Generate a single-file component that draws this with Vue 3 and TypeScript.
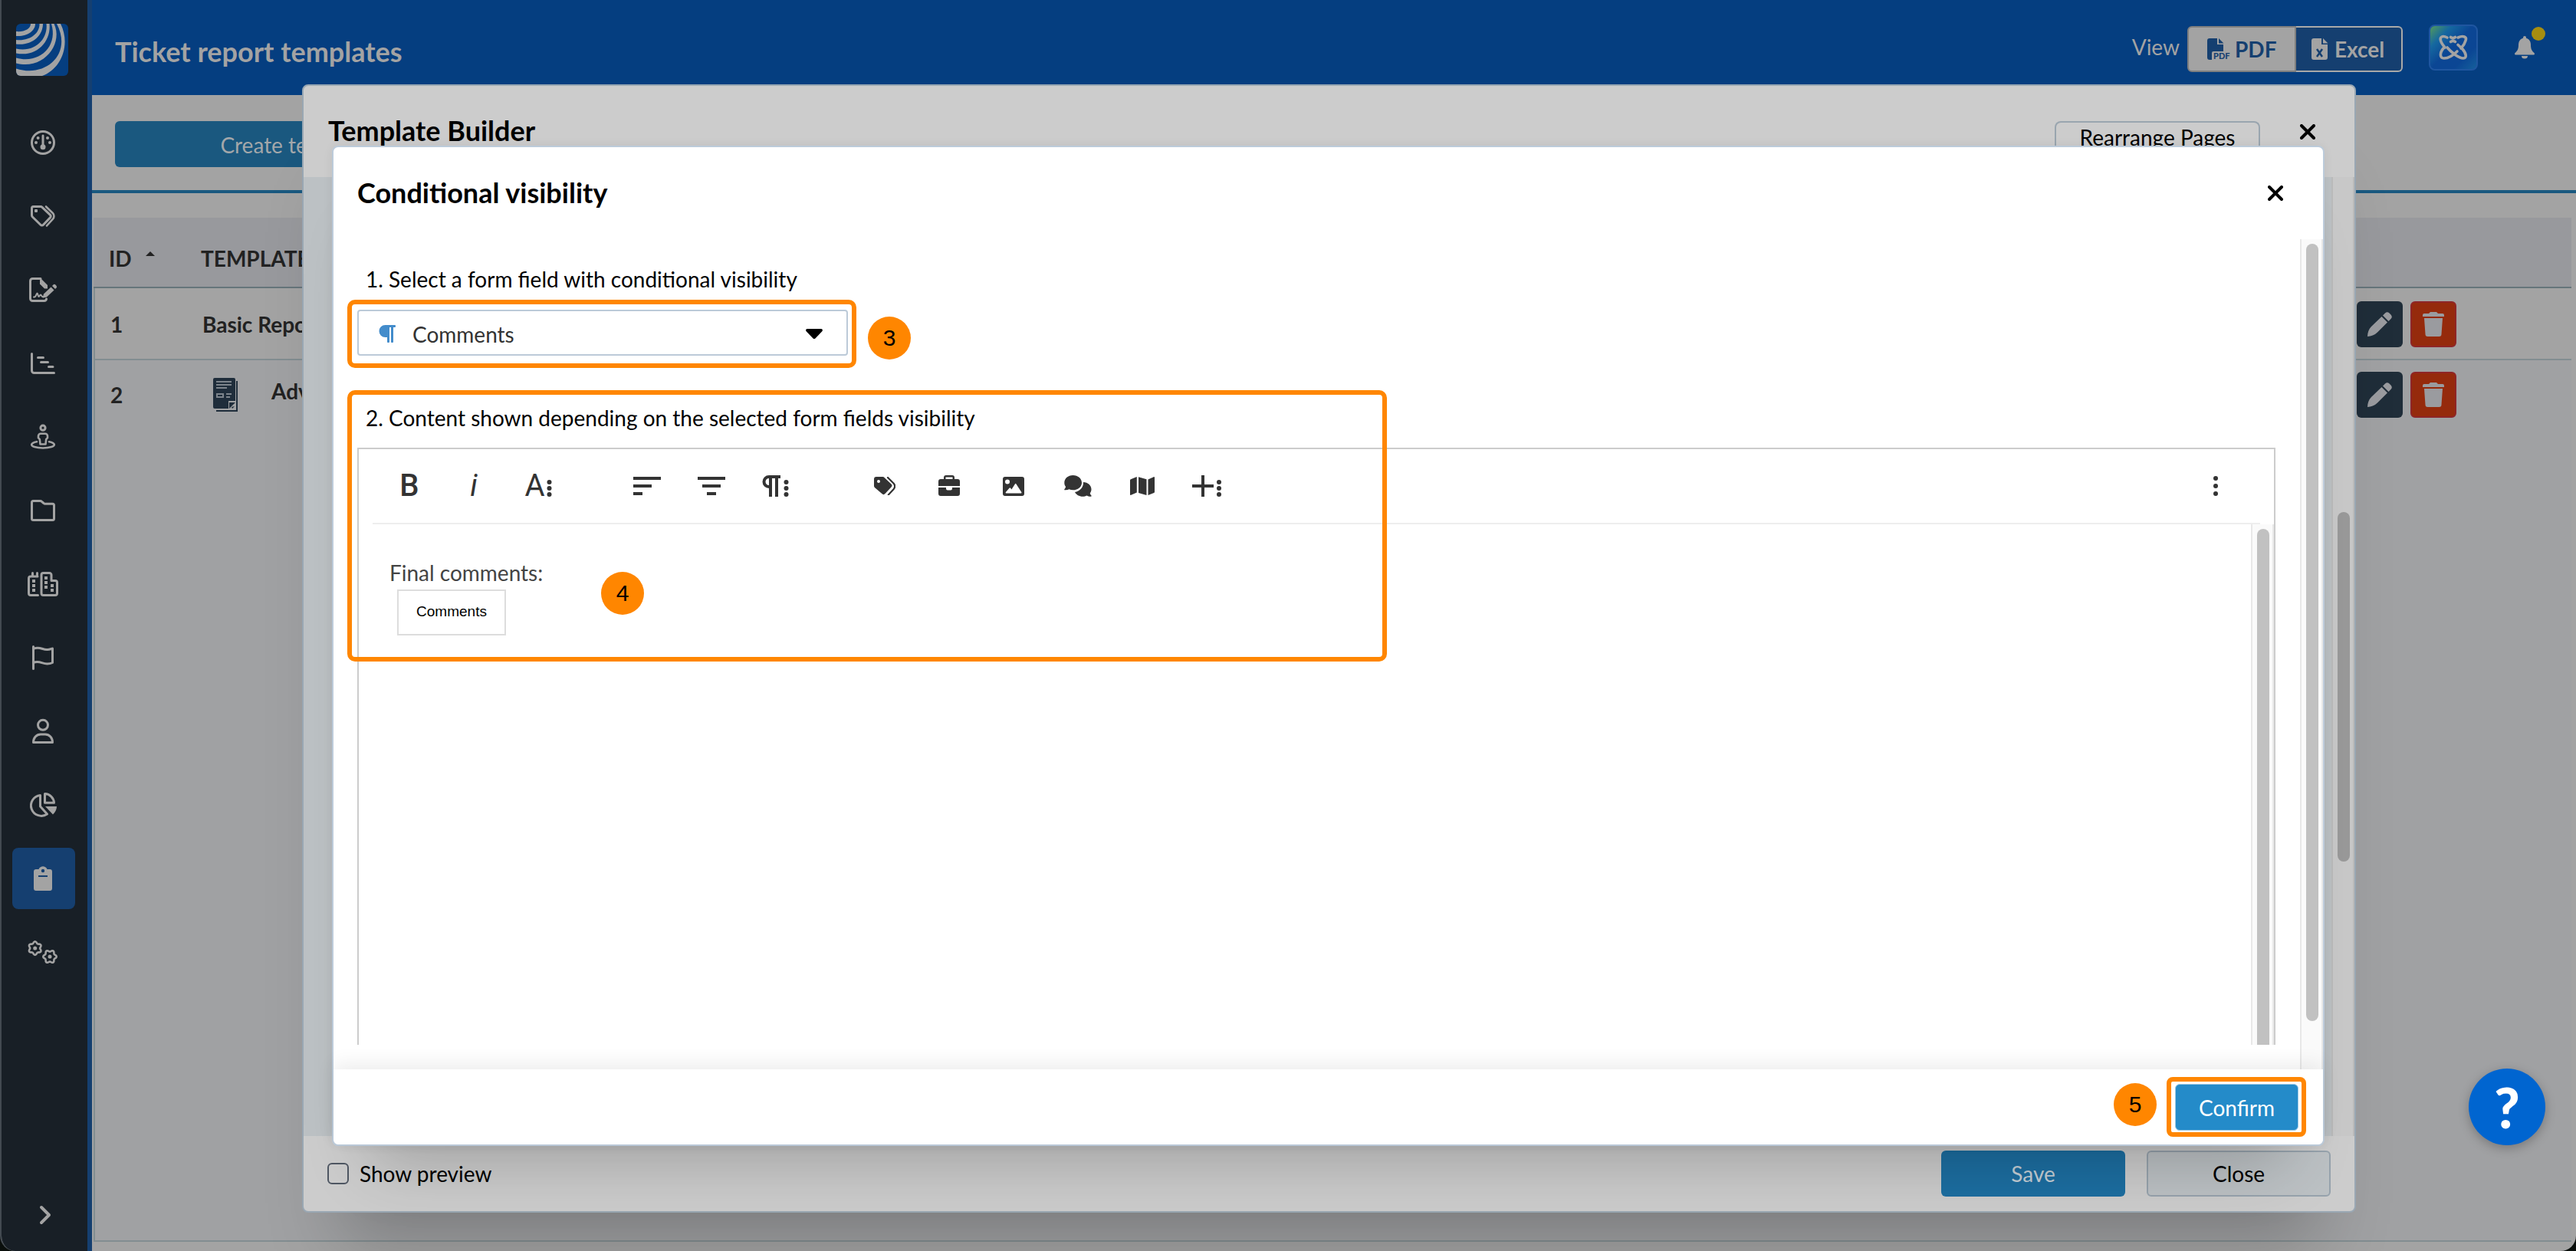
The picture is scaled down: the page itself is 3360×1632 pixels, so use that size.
<script setup lang="ts">
import { ref } from 'vue'

interface TemplateRow {
  id: number
  name: string
  advanced: boolean
}

const rows: TemplateRow[] = [
  { id: 1, name: 'Basic Report', advanced: false },
  { id: 2, name: 'Advanced Report', advanced: true },
]

const navItems = [
  'Dashboard', 'Tickets', 'Forms', 'Planning', 'Field view', 'Folders',
  'Companies', 'Flags', 'Users', 'Statistics', 'Report templates', 'Settings',
]
const activeItem = ref('Report templates')
const field = ref('Comments')
const preview = ref(false)

// Closed outline of a six-toothed cog around (cx, cy)
function cog(cx: number, cy: number, phase: number): string {
  const pts: string[] = []
  for (let i = 0; i < 72; i++) {
    const a = (i / 72) * Math.PI * 2
    const r = 7.6 + 1.1 * Math.cos(6 * (a + phase))
    pts.push(`${(cx + r * Math.cos(a)).toFixed(2)},${(cy + r * Math.sin(a)).toFixed(2)}`)
  }
  return pts.join(' ')
}
</script>

<template>
  <div class="window">
    <nav class="sidebar" aria-label="Main">
      <svg class="logo" viewBox="0 0 68 68" aria-hidden="true">
        <rect width="68" height="68" fill="#053e80" />
        <g fill="#a3a3a3">
          <path d="M25 0C25 9 15 17 0 16V10C10 11 19 7 19 0Z" />
          <path d="M35 0C35 16 20 29 0 26.500V21C17 23 31 13 30.500 0Z" />
          <path d="M43.500 0C46 22 28 44 0 38.500V32.500C24 38 42 20 39.500 0Z" />
          <path d="M49.500 0C62 26 36 61 0 51.500V44.500C31 53 55 29 46 0Z" />
          <path d="M58 0C72 28 58 60 34 68H0V58.500C38 71 74 40 53 0Z" />
        </g>
      </svg>
      <ul>
        <li v-for="(item, i) in navItems" :key="item">
          <button class="nav" :class="{ active: item === activeItem }" :aria-label="item" @click="activeItem = item">
            <svg viewBox="0 0 40 40" class="line" aria-hidden="true">
              <template v-if="i === 0">
                <circle cx="20" cy="20" r="14.500" />
                <path d="M20 11v13" />
                <g class="solid"><circle cx="20" cy="25.800" r="3.500" /><circle cx="13.600" cy="14" r="2" /><circle cx="26" cy="14" r="2" /><circle cx="11" cy="20" r="2" /><circle cx="29" cy="20" r="2" /></g>
              </template>
              <template v-else-if="i === 1">
                <path d="M5.500 9.500a2 2 0 0 1 2-2H17a3 3 0 0 1 2 .8L29.500 18.300a2.500 2.500 0 0 1 0 3.600L20.500 31.300a2.500 2.500 0 0 1-3.600 0L6.400 21a3 3 0 0 1-.9-2.200Z" />
                <path d="M24 7.500L32.800 16a5.500 5.500 0 0 1 0 7.800L25 32.500" stroke-width="2.600" />
                <rect class="solid" x="9" y="11" width="4" height="4" rx="1" />
              </template>
              <template v-else-if="i === 2">
                <path d="M17 5.500H6.500a3 3 0 0 0-3 3v23a3 3 0 0 0 3 3h15a3 3 0 0 0 3-2.500" />
                <path d="M8 29.500h1c2 0 2.500-5 3.500-5s1 4.500 2 4.500 1.500-2.500 2.500-2.500 1 2.500 2.500 2.500h3" stroke-width="2" />
                <g class="solid">
                  <path d="M16 4l10 10v4.500h-4l-6-6Z" />
                  <path d="M19.500 30.800l1.500-5.300 9.500-9 4 4-9.500 9Z" />
                  <path d="M32 15l1.500-1.500a2 2 0 0 1 2.800 0l1.200 1.200a2 2 0 0 1 0 2.800L36 19Z" />
                </g>
              </template>
              <template v-else-if="i === 3">
                <path d="M5.500 7.500v22a3 3 0 0 0 3 3h26M13.500 12.500h7M17.500 18.500h9M27.500 24.500h5.500" />
              </template>
              <template v-else-if="i === 4">
                <circle cx="20" cy="8.200" r="3.100" />
                <path d="M17 15.800h6a3 3 0 0 1 3 3v2.400l-1.800 2-.7 6.300h-7l-.7-6.300-1.800-2v-2.400a3 3 0 0 1 3-3Z" stroke-width="2.600" />
                <path d="M12 26.200C3.500 28 3.500 31.500 9 33c6 1.900 16 1.900 22 0 5.500-1.500 5.500-5-3-6.800" stroke-width="2.600" />
              </template>
              <template v-else-if="i === 5">
                <path d="M5.500 9.500a2 2 0 0 1 2-2h9a3 3 0 0 1 2 .8l2.500 2.200a3 3 0 0 0 2 .8h9.500a2 2 0 0 1 2 2v17.200a2 2 0 0 1-2 2h-25a2 2 0 0 1-2-2Z" />
              </template>
              <template v-else-if="i === 6">
                <path d="M13 10H4a2.500 2.500 0 0 0-2.500 2.500v19.500a2.500 2.500 0 0 0 2.500 2.500h9.500M6.500 9.500v-4M12.500 9.500v-4" />
                <path d="M18 8a2.500 2.500 0 0 1 2.500-2.500h8A2.500 2.500 0 0 1 31 8v7.500h5a2.500 2.500 0 0 1 2.500 2.500v14a2.500 2.500 0 0 1-2.500 2.500H20.500A2.500 2.500 0 0 1 18 32Z" />
                <g class="solid">
                  <path d="M6 14h4v4H6ZM6 20h4v4H6ZM6 26h4v4H6ZM22 10h4v4h-4ZM22 16h4v4h-4ZM22 22h4v4h-4ZM30 20h4v4h-4ZM30 26h4v4h-4Z" />
                </g>
              </template>
              <template v-else-if="i === 7">
                <path d="M7.500 5.500v29M7.500 8.500c8-3.500 11 1 18 1 3 0 5-1 7-1.500v18.500c-2 1-4 1.500-7 1.500-7 0-10-4.500-18-1.500" />
              </template>
              <template v-else-if="i === 8">
                <circle cx="20" cy="11.800" r="6.500" />
                <path d="M7.500 34.500h25c0-6-4-10.500-9.500-10.500h-6c-5.500 0-9.500 4.500-9.500 10.500Z" />
              </template>
              <template v-else-if="i === 9">
                <path d="M16.500 7.400A13.500 13.500 0 1 0 25.500 32L16.500 22Z" />
                <path d="M22.500 5.500a12.500 12.500 0 0 1 12 11.800h-12Z" />
                <path class="solid" d="M23 22h15c0 4-2 8-5 10.500Z" />
              </template>
              <template v-else-if="i === 10">
                <path class="solid" fill-rule="evenodd" d="M11 8h3.500c2-5 9-5 11 0H29a3 3 0 0 1 3 3v22a3 3 0 0 1-3 3H11a3 3 0 0 1-3-3V11a3 3 0 0 1 3-3ZM20 7.800a2 2 0 1 0 0 4.400 2 2 0 0 0 0-4.400ZM14 16v2h12v-2Z" />
              </template>
              <template v-else>
                <polygon :points="cog(9.700, 15, 0.520)" stroke-width="2.600" />
                <polygon :points="cog(29, 26, 0)" stroke-width="2.600" />
                <g class="solid"><circle cx="9.700" cy="15" r="2.500" /><circle cx="29" cy="26" r="2.500" /></g>
              </template>
            </svg>
          </button>
        </li>
      </ul>
      <button class="expand" aria-label="Expand menu">
        <svg width="16" height="26" viewBox="0 0 16 26"><path d="M3 3l10 10L3 23" fill="none" stroke="#a3a3a3" stroke-width="4" stroke-linecap="round" stroke-linejoin="round" /></svg>
      </button>
    </nav>

    <main class="page">
      <header class="topbar">
        <h1>Ticket report templates</h1>
        <div class="view">
          <span>View</span>
          <div class="toggle">
            <button class="pdf">
              <svg width="30" height="28" viewBox="0 0 30 28" aria-hidden="true">
                <path fill="#153f70" d="M3 0h10v8h8v9H8a2 2 0 0 0-2 2v9H3a3 3 0 0 1-3-3V3a3 3 0 0 1 3-3ZM15 0l6.500 6.500H15Z" />
                <text x="8" y="27" font-family="Lato, sans-serif" font-size="11" font-weight="900" fill="#153f70">PDF</text>
              </svg>PDF
            </button>
            <button class="excel">
              <svg width="22" height="28" viewBox="0 0 22 28" aria-hidden="true">
                <path fill="#a3a3a3" d="M3 0h10v8h8v17a3 3 0 0 1-3 3H3a3 3 0 0 1-3-3V3a3 3 0 0 1 3-3ZM15 0l6.500 6.500H15Z" />
                <path d="M7 14l7 10M14 14L7 24" stroke="#153f70" stroke-width="2.500" />
              </svg>Excel
            </button>
          </div>
        </div>
        <button class="app" aria-label="Apps">
          <svg width="60" height="56" viewBox="0 0 60 56" fill="none" stroke="#a3a3a3" stroke-width="3.600" stroke-linecap="round" stroke-linejoin="round" aria-hidden="true">
            <path d="M22 15c-6-3-10-1-8.500 4 1 3.500 3 6 5.500 9" />
            <path d="M36 15c7-3 12-1 10 4-1 3.500-3 7-6 10" />
            <path d="M17 29c-5 6-5 13 1 13 5 0 12-4 17-9" />
            <path d="M22 28c5 6 15 14 21 14 5 0 4-6-1-12" />
            <path d="M26.500 14.500c2 1.500 4 1.500 6 0M26.500 20.500c2-1.500 4-1.500 6 0M36 24.500l5.500 5" />
          </svg>
        </button>
        <button class="bell" aria-label="Notifications">
          <svg width="26" height="30" viewBox="0 0 26 30" aria-hidden="true">
            <path fill="#a3a3a3" d="M13 0a2 2 0 0 1 2 2v.8c4 1 6 4.500 6 8.700 0 5 1 7.500 4.500 10.500.8 1 .5 2.500-1 2.500H1.500c-1.500 0-1.800-1.500-1-2.500C4 19 5 16.500 5 11.500c0-4.200 2-7.700 6-8.700V2a2 2 0 0 1 2-2ZM9 26h8a4 3.500 0 0 1-8 0Z" />
          </svg>
          <i class="dot"></i>
        </button>
      </header>

      <div class="actions">
        <button class="create">Create template</button>
      </div>

      <table class="templates">
        <thead>
          <tr>
            <th class="id">ID<i class="sort"></i></th>
            <th>TEMPLATE NAME</th>
            <th class="tools"></th>
          </tr>
        </thead>
        <tbody>
          <tr v-for="row in rows" :key="row.id">
            <td class="id">{{ row.id }}</td>
            <td>
              <div class="name">
                <svg v-if="row.advanced" width="32" height="44" viewBox="0 0 32 44" aria-hidden="true">
                  <path d="M4 43h27V4" fill="none" stroke="#1f2d3b" stroke-width="2" />
                  <path d="M2 0h25a2 2 0 0 1 2 2v28h-9v10H2a2 2 0 0 1-2-2V2a2 2 0 0 1 2-2Z" fill="#1f2d3b" />
                  <path d="M21 32h8l-8 8ZM24 38l4-1-3 3Z" fill="#1f2d3b" />
                  <path d="M4 5h20M4 9h20M4 13h14M17 21h7M17 25h5" stroke="#7d848c" stroke-width="2" />
                  <rect x="5" y="21" width="8" height="4" fill="none" stroke="#7d848c" stroke-width="2" />
                </svg>
                {{ row.name }}
              </div>
            </td>
            <td class="tools">
              <div class="pair">
                <button class="edit" aria-label="Edit">
                  <svg width="32" height="32" viewBox="0 0 32 32"><path fill="#9a9b9f" d="M18.500 6l7.500 7.500L13 26.500C9 30.500 5 31.500 0 32c.2-5 1.500-9.500 5-13ZM20 4.500L23 1.500a4 4 0 0 1 5.500 0l2 2a4 4 0 0 1 0 5.500L27.500 12Z" /></svg>
                </button>
                <button class="delete" aria-label="Delete">
                  <svg width="28" height="32" viewBox="0 0 28 32"><path fill="#9a9b9f" d="M8 2l2-2h8l2 2h6a2 2 0 0 1 2 2v2H0V4a2 2 0 0 1 2-2ZM2 8h24l-1.500 21a3 3 0 0 1-3 3h-15a3 3 0 0 1-3-3Z" /></svg>
                </button>
              </div>
            </td>
          </tr>
        </tbody>
      </table>
      <div class="rest"></div>
    </main>

    <div class="layer outer">
      <section class="dialog builder" role="dialog" aria-label="Template Builder">
        <header>
          <h2>Template Builder</h2>
          <button class="rearrange">Rearrange Pages</button>
          <button class="close" aria-label="Close dialog">
            <svg width="20" height="20" viewBox="0 0 20 20"><path d="M2 2l16 16M18 2L2 18" stroke="#000" stroke-width="4" stroke-linecap="round" /></svg>
          </button>
        </header>
        <div class="canvas"><div class="track"><i></i></div></div>
        <footer>
          <label><input v-model="preview" type="checkbox" />Show preview</label>
          <button class="save">Save</button>
          <button class="cancel">Close</button>
        </footer>
      </section>
    </div>

    <div class="layer inner">
      <section class="dialog condition" role="dialog" aria-label="Conditional visibility">
        <header>
          <h2>Conditional visibility</h2>
          <button class="close" aria-label="Close dialog">
            <svg width="20" height="20" viewBox="0 0 20 20"><path d="M2 2l16 16M18 2L2 18" stroke="#000" stroke-width="4" stroke-linecap="round" /></svg>
          </button>
        </header>
        <div class="body">
          <div class="form">
            <label class="caption" for="field">1. Select a form field with conditional visibility</label>
            <div class="picker">
              <select id="field" v-model="field">
                <option>Comments</option>
              </select>
              <svg class="mark" width="22" height="23" viewBox="0 0 22 23" aria-hidden="true"><path fill="#438ccb" d="M8.500 0H21a1 1 0 0 1 1 1v1a1 1 0 0 1-1 1h-2v19a1 1 0 0 1-1 1h-1a1 1 0 0 1-1-1V3h-2v19a1 1 0 0 1-1 1h-1a1 1 0 0 1-1-1v-6H8.500a8 8 0 0 1 0-16Z" /></svg>
              <svg class="caret" width="22" height="13" viewBox="0 0 22 13" aria-hidden="true"><path d="M2 0h18c1.800 0 2.500 2 1.300 3.200l-8.600 9a2.400 2.400 0 0 1-3.400 0L.7 3.200C-.5 2 .2 0 2 0Z" /></svg>
              <i class="outline"></i>
              <b class="badge three">3</b>
            </div>
            <div class="content">
              <p class="caption">2. Content shown depending on the selected form fields visibility</p>
              <div class="editor">
                <div class="toolbar">
                  <div class="group">
                    <button aria-label="Bold"><span class="glyph medium">B</span></button>
                    <button aria-label="Italic"><span class="glyph italic">i</span></button>
                    <button aria-label="More text"><span class="glyph">A</span><svg width="7" height="28" viewBox="0 0 7 28"><circle cx="3.500" cy="9" r="3" /><circle cx="3.500" cy="17" r="3" /><circle cx="3.500" cy="25" r="3" /></svg></button>
                  </div>
                  <div class="group">
                    <button aria-label="Align left"><svg width="36" height="24" viewBox="0 0 36 24"><path d="M0 0h36v4H0ZM0 10h24v4H0ZM0 20h12v4H0Z" /></svg></button>
                    <button aria-label="Align center"><svg width="36" height="24" viewBox="0 0 36 24"><path d="M0 0h36v4H0ZM6 10h24v4H6ZM12 20h12v4H12Z" /></svg></button>
                    <button aria-label="More paragraph"><svg width="36" height="28" viewBox="0 0 36 28"><path fill-rule="evenodd" d="M9 0h15v4h-3v24h-4V4h-4v24H9V17A8.500 8.500 0 0 1 9 0ZM9 4a4.500 4.500 0 0 0 0 9Z" /><circle cx="31.500" cy="9" r="3" /><circle cx="31.500" cy="17" r="3" /><circle cx="31.500" cy="25" r="3" /></svg></button>
                  </div>
                  <div class="group">
                    <button aria-label="Tags"><svg width="28" height="24" viewBox="0 0 28 24"><path fill-rule="evenodd" d="M3 0h8.500a3 3 0 0 1 2 .9l9 8.500a3 3 0 0 1 0 4.200l-8 8.500a3 3 0 0 1-4.200 0L.9 14A3 3 0 0 1 0 12V3a3 3 0 0 1 3-3ZM6 4a2 2 0 1 0 0 4 2 2 0 0 0 0-4Z" /><path d="M18 1l7.500 7.500c2 2.300 2 5.500 0 7.800L18.800 23.500" fill="none" stroke="#333" stroke-width="2.200" stroke-linecap="round" /></svg></button>
                    <button aria-label="Toolbox"><svg width="28" height="28" viewBox="0 0 28 28"><path fill-rule="evenodd" d="M7 5V3a3 3 0 0 1 3-3h8a3 3 0 0 1 3 3v2h4a3 3 0 0 1 3 3v6H0V8a3 3 0 0 1 3-3ZM9.500 5h9V2.500h-9ZM0 16h10v1.500a2 2 0 0 0 2 2h4a2 2 0 0 0 2-2V16h10v8a3 3 0 0 1-3 3H3a3 3 0 0 1-3-3Z" /></svg></button>
                    <button aria-label="Image"><svg width="28" height="25" viewBox="0 0 28 25"><path fill-rule="evenodd" d="M3 0h22a3 3 0 0 1 3 3v19a3 3 0 0 1-3 3H3a3 3 0 0 1-3-3V3a3 3 0 0 1 3-3ZM6 3.500a3 3 0 1 0 0 6 3 3 0 0 0 0-6ZM4.500 21.500h19a1 1 0 0 0 .8-1.600l-6.800-10.500a1 1 0 0 0-1.600 0l-4.500 7-1.300-1.700a1 1 0 0 0-1.600 0l-4.600 5.200a1 1 0 0 0 .6 1.600Z" /></svg></button>
                    <button aria-label="Comments"><svg width="36" height="28" viewBox="0 0 36 28"><path d="M11.500 0C18 0 23 4.300 23 9.700S18 19.300 11.500 19.300c-1.800 0-3.500-.3-5-1C5 19.100 3 19.500.8 19.300.2 19.300 0 18.600.4 18.200 1.500 17 2 15.800 2 14.800.8 13.300.3 11.600.3 9.700.3 4.300 5 0 11.500 0Z" /><path d="M25 9c6 .2 10.500 4.300 10.500 9.300 0 1.900-.6 3.600-1.700 5 0 1 .5 2 1.700 3.200.4.500.1 1.100-.5 1.200-2 .1-4-.4-5.500-1.300-1.500.8-3.300 1.300-5.300 1.300-4.500 0-8.500-2.400-10.200-5.800C20 21.200 25.500 16 25 9Z" /></svg></button>
                    <button aria-label="Map"><svg width="32" height="24" viewBox="0 0 32 24"><path d="M0 4.500c0-.6.400-1 .9-1.300L8.800 0v20.500L1.300 23.800c-.7.300-1.300 0-1.300-.8ZM11 .3l10.500 3V24L11 21ZM23.500 3.500L30.700.2c.7-.3 1.300 0 1.300.8v18.700c0 .6-.3 1-.9 1.300L23.500 24Z" /></svg></button>
                    <button aria-label="More rich"><svg width="38" height="28" viewBox="0 0 38 28"><path d="M12 0h4v12h12v4H16v12h-4V16H0v-4h12Z" /><circle cx="35" cy="9" r="3" /><circle cx="35" cy="17" r="3" /><circle cx="35" cy="25" r="3" /></svg></button>
                  </div>
                  <button class="more" aria-label="More"><svg width="8" height="26" viewBox="0 0 8 26"><circle cx="4" cy="3" r="3" /><circle cx="4" cy="13" r="3" /><circle cx="4" cy="23" r="3" /></svg></button>
                </div>
                <div class="area">
                  <div class="text">
                    <p>Final comments:</p>
                    <span class="chip">Comments</span>
                  </div>
                  <div class="track"><i></i></div>
                </div>
              </div>
              <i class="outline wide"></i>
              <b class="badge four">4</b>
            </div>
          </div>
          <div class="track"><i></i></div>
        </div>
        <footer>
          <b class="badge">5</b>
          <div class="ring"><button class="confirm">Confirm</button></div>
        </footer>
      </section>
    </div>

    <button class="help" aria-label="Help">?</button>
  </div>
</template>

<style>
body {
  background: #0a0f0c;
}
</style>

<style scoped>
* {
  box-sizing: border-box;
}
h1, h2, p, ul {
  margin: 0;
  padding: 0;
}
ul {
  list-style: none;
}
button {
  margin: 0;
  padding: 0;
  border: 0;
  background: none;
  font: inherit;
  color: inherit;
}
svg {
  display: block;
  flex: none;
}
.window {
  position: relative;
  display: flex;
  height: 100vh;
  overflow: hidden;
  border-radius: 0 0 20px 20px;
  border-left: 2px solid #434a51;
  background: #a3a3a3;
  font: 28px/34px Lato, sans-serif;
  color: #000;
}

/* Sidebar */
.sidebar {
  display: flex;
  flex-direction: column;
  flex: none;
  width: 118px;
  padding: 31px 0 34px 14px;
  border-right: 6px solid #153f70;
  background: #181f26;
}
.logo {
  width: 68px;
  height: 68px;
  margin: 0 0 47px 5px;
  border-radius: 6px;
}
.sidebar ul {
  display: flex;
  flex-direction: column;
  gap: 16px;
}
.nav {
  display: flex;
  align-items: center;
  justify-content: center;
  width: 82px;
  height: 80px;
  padding-right: 2px;
  border-radius: 8px;
}
.nav.active {
  background: #153f70;
}
.nav svg {
  width: 40px;
  height: 40px;
}
.line {
  fill: none;
  stroke: #a3a3a3;
  stroke-width: 3;
  stroke-linecap: round;
  stroke-linejoin: round;
}
.solid {
  fill: #a3a3a3;
  stroke: none;
}
.expand {
  margin-top: auto;
  padding-left: 35px;
}

/* Page behind the dialogs */
.page {
  display: flex;
  flex: 1;
  flex-direction: column;
  min-width: 0;
  padding-bottom: 12px;
}
.topbar {
  display: flex;
  align-items: center;
  height: 124px;
  padding: 0 40px 0 30px;
  background: #053e80;
  color: #a3a3a3;
}
h1 {
  flex: 1;
  padding-top: 10px;
  font-size: 36px;
  line-height: 44px;
}
.view {
  display: flex;
  gap: 10px;
  padding-top: 4px;
}
.view span {
  padding-top: 10px;
}
.toggle {
  display: flex;
  font-weight: 700;
}
.toggle button {
  display: flex;
  align-items: center;
  gap: 8px;
  height: 60px;
  border: 2px solid #a9a9a9;
  border-radius: 0 6px 6px 0;
}
.toggle .pdf {
  gap: 6px;
  width: 142px;
  padding: 0 0 0 24px;
  border-color: #7f7f7f;
  border-radius: 6px 0 0 6px;
  background: #a3a3a3;
  color: #153f70;
}
.toggle .excel {
  width: 139px;
  padding-left: 20px;
  border-left: 0;
  background: #153f70;
}
.app {
  width: 64px;
  height: 60px;
  margin-left: 34px;
  border: 2px solid #1f56a0;
  border-radius: 8px;
  background: linear-gradient(135deg, #539a5c 0%, #1568a0 24%, #0b4694 48%, #0b4694 74%, #15609b 100%);
}
.bell {
  position: relative;
  width: 46px;
  margin-left: 42px;
  padding-left: 6px;
}
.dot {
  position: absolute;
  top: -12px;
  right: 0;
  width: 18px;
  height: 18px;
  border-radius: 50%;
  background: #a68d10;
}
.actions {
  height: 128px;
  padding: 34px 30px;
  border-bottom: 4px solid #1a5980;
}
.create {
  width: 472px;
  height: 60px;
  padding-top: 2px;
  border-radius: 6px;
  background: #1a587f;
  color: #a3a7aa;
}
.templates {
  width: calc(100% - 8px);
  margin: 32px 6px 0 2px;
  border-spacing: 0;
  table-layout: fixed;
  font-weight: 700;
  color: #222;
}
th {
  height: 92px;
  padding: 16px 0 0;
  border-bottom: 2px solid #66757b;
  background: #98999d;
  text-align: left;
}
td {
  height: 94px;
  padding: 2px 0 0;
  border-bottom: 2px solid #828d91;
}
tbody tr:last-child td {
  height: 90px;
  padding: 0;
  border-bottom: 0;
  background: #a0a1a3;
}
.id {
  width: 140px;
}
th.id, td.id, tbody tr:last-child td.id {
  padding-left: 20px;
}
td.id {
  border-left: 2px solid #828d91;
}
.sort {
  display: inline-block;
  margin-left: 18px;
  border: 6px solid transparent;
  border-top: 0;
  border-bottom-color: #222;
  vertical-align: 14px;
}
.name {
  display: flex;
  gap: 44px;
  padding-left: 2px;
}
.name svg {
  margin-left: 14px;
}
.tools {
  width: 280px;
}
.pair {
  display: flex;
  gap: 10px;
}
.pair button {
  display: flex;
  align-items: center;
  justify-content: center;
  width: 60px;
  height: 60px;
  border-radius: 6px;
}
.edit {
  background: #1f2d39;
}
.delete {
  border: 2px solid #8f2526;
  background: #952a0c;
}
.rest {
  flex: 1;
  margin: 0 6px 0 2px;
  border: solid #828d91;
  border-width: 0 0 2px 2px;
  background: #a0a1a3;
}

/* Dialogs */
.layer {
  position: absolute;
  inset: 0;
  display: flex;
}
.outer {
  padding: 110px 287px 50px 392px;
}
.inner {
  padding: 190px 328px 137px 431px;
}
.dialog {
  display: flex;
  flex: 1;
  flex-direction: column;
  border-radius: 8px;
}
h2 {
  flex: 1;
  font-size: 36px;
  line-height: 44px;
}
.builder {
  border: 2px solid #99a7b3;
  background: #ccc;
  box-shadow: 0 90px 90px -50px rgba(0, 0, 0, 0.22);
}
.builder header {
  display: flex;
  align-items: flex-start;
  height: 119px;
  padding: 36px 51px 0 32px;
}
.rearrange {
  width: 268px;
  height: 40px;
  margin: 10px 52px 0 0;
  border: 2px solid #99a5af;
  border-bottom: 0;
  border-radius: 8px 8px 0 0;
}
.builder .close {
  padding-top: 14px;
}
.canvas {
  display: flex;
  flex: 1;
  justify-content: flex-end;
  background: #bcc1c4;
}
.track {
  flex: none;
  width: 30px;
  padding: 6px;
  border: solid #e8e8e8;
  border-width: 0 2px;
  background: #fafafa;
}
.track i {
  display: block;
  width: 16px;
  height: 100%;
  border-radius: 8px;
  background: #c1c1c1;
}
.canvas .track {
  padding: 437px 4px 0 6px;
  border-color: #bababa;
  background: #c8c8c8;
}
.canvas .track i {
  height: 456px;
  background: #999;
}
.builder footer {
  display: flex;
  align-items: center;
  gap: 28px;
  height: 98px;
  padding: 0 31px;
}
.builder footer label {
  display: flex;
  flex: 1;
  align-items: center;
  gap: 14px;
}
input {
  width: 28px;
  height: 28px;
  margin: 0;
  border: 2px solid #4f5763;
  border-radius: 6px;
  appearance: none;
}
.builder footer button {
  width: 240px;
  height: 60px;
  border-radius: 6px;
}
.save {
  background: #1c6ea1;
  color: #c4cfd6;
}
.builder footer .cancel {
  border: 2px solid #97a3ad;
  background: #bcc1c4;
}
.condition {
  border: 2px solid #bccbda;
  background: #fff;
  box-shadow: 0 70px 80px -50px rgba(0, 0, 0, 0.22), 0 0 16px -4px rgba(0, 0, 0, 0.12);
}
.condition header {
  display: flex;
  align-items: flex-start;
  height: 120px;
  padding: 37px 52px 0 31px;
}
.condition .close {
  padding-top: 13px;
}
.body {
  display: flex;
  flex: 1;
  min-height: 0;
}
.body > .track {
  padding: 6px 6px 63px;
}
.form {
  display: flex;
  flex: 1;
  flex-direction: column;
  padding: 35px 32px 32px 31px;
}
.caption {
  padding-left: 11px;
}
.picker {
  position: relative;
  width: 640px;
  margin: 23px 0 30px;
}
select {
  display: block;
  width: 100%;
  height: 60px;
  padding: 3px 60px 0 70px;
  border: 2px solid #bccad8;
  border-radius: 4px;
  appearance: none;
  background: #fff;
  font: inherit;
  color: #333;
}
.mark {
  position: absolute;
  top: 20px;
  left: 28px;
}
.caret {
  position: absolute;
  top: 25px;
  right: 33px;
}
.outline {
  position: absolute;
  inset: -13px -11px -16px -13px;
  border: 6px solid #ff8600;
  border-radius: 10px;
  pointer-events: none;
}
.badge {
  width: 56px;
  height: 56px;
  border-radius: 50%;
  background: #ff8600;
  font: 30px/56px "Liberation Sans", sans-serif;
  text-align: center;
}
.three {
  position: absolute;
  top: 9px;
  left: 666px;
}
.content {
  position: relative;
  display: flex;
  flex: 1;
  flex-direction: column;
  padding-top: 34px;
}
.outline.wide {
  inset: 15px auto auto -13px;
  width: 1356px;
  height: 354px;
}
.four {
  position: absolute;
  top: 252px;
  left: 318px;
}
.editor {
  display: flex;
  flex: 1;
  flex-direction: column;
  margin-top: 22px;
  border: 2px solid #ccc;
  border-bottom: 0;
}
.toolbar {
  display: flex;
  gap: 58px;
  height: 98px;
  margin: 0 18px;
  padding: 0 16px 0 6px;
  border-bottom: 2px solid #eee;
  fill: #333;
  color: #333;
}
.group {
  display: flex;
}
.toolbar button {
  display: flex;
  align-items: center;
  justify-content: center;
  gap: 2px;
  width: 84px;
}
.toolbar .more {
  margin-left: auto;
}
.glyph {
  font: 40px/48px Roboto, sans-serif;
}
.medium {
  font-weight: 500;
}
.italic {
  font-style: italic;
}
.area {
  display: flex;
  flex: 1;
}
.area .track {
  padding-bottom: 0;
}
.area .track i {
  border-radius: 8px 8px 0 0;
}
.text {
  flex: 1;
  padding: 46px 40px;
  color: #444;
}
.chip {
  display: block;
  width: 142px;
  height: 60px;
  margin: 5px 10px;
  border: 2px solid #ddd;
  font: 19px/54px "Liberation Sans", sans-serif;
  color: #000;
  text-align: center;
}
.condition footer {
  display: flex;
  align-items: flex-start;
  justify-content: flex-end;
  gap: 13px;
  height: 98px;
  padding: 10px 22px 0;
  border-radius: 0 0 8px 8px;
  background: #fff;
  box-shadow: 0 -8px 24px rgba(0, 0, 0, 0.07);
  z-index: 1;
}
.condition footer .badge {
  margin-top: 8px;
}
.ring {
  padding: 3px 4px 2px 5px;
  border: 6px solid #ff8600;
  border-radius: 8px;
}
.confirm {
  display: block;
  width: 161px;
  height: 61px;
  border: 1px solid #9cc8e4;
  border-radius: 6px;
  background: #248bc9;
  color: #fff;
}
.help {
  position: absolute;
  right: 40px;
  bottom: 138px;
  width: 100px;
  height: 100px;
  border-radius: 50%;
  background: #0065d0;
  box-shadow: 0 4px 14px rgba(0, 0, 0, 0.25);
  color: #fff;
  font: 900 72px/100px Lato, sans-serif;
}
</style>
